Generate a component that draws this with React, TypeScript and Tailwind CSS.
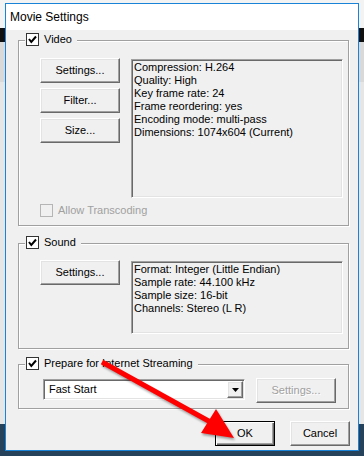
import React from 'react';

const raised =
  'border border-t-white border-l-white border-b-[#696969] border-r-[#696969] shadow-[inset_-1px_-1px_0_#a0a0a0,inset_1px_1px_0_#e3e3e3]';
const sunken =
  'border border-t-[#a0a0a0] border-l-[#a0a0a0] border-b-white border-r-white shadow-[inset_1px_1px_0_#696969,inset_-1px_-1px_0_#e3e3e3]';

function CheckBox({ checked = true, disabled = false }: { checked?: boolean; disabled?: boolean }) {
  return (
    <div
      className={`flex h-[13px] w-[13px] shrink-0 items-center justify-center border ${
        disabled ? 'border-[#b5b5b5] bg-[#f0f0f0]' : 'border-[#333] bg-white'
      }`}
    >
      {checked && (
        <svg width="11" height="11" viewBox="0 0 11 11">
          <polyline points="2,5 4.3,8 9,2.5" fill="none" stroke="#000" strokeWidth="2" />
        </svg>
      )}
    </div>
  );
}

function Button({ label, w = 'w-[80px]', disabled = false, isDefault = false }: { label: string; w?: string; disabled?: boolean; isDefault?: boolean }) {
  if (isDefault) {
    return (
      <div className={`flex h-[25px] ${w} items-center justify-center border border-black bg-[#f0f0f0] shadow-[inset_1px_1px_0_#fff,inset_-1px_-1px_0_#696969,inset_-2px_-2px_0_#a0a0a0]`}>
        <span>{label}</span>
      </div>
    );
  }
  return (
    <div className={`flex h-[25px] ${w} items-center justify-center bg-[#f0f0f0] ${raised}`}>
      <span className={disabled ? 'text-[#a0a0a0] [text-shadow:1px_1px_0_#fff]' : ''}>{label}</span>
    </div>
  );
}

function Group({ title, className, children }: { title: string; className: string; children: React.ReactNode }) {
  return (
    <div
      className={`relative ml-[12px] w-[331px] border border-[#a0a0a0] shadow-[1px_1px_0_#fff,inset_1px_1px_0_#fff] ${className}`}
    >
      <div className="absolute left-[6px] top-[-8px] flex h-[13px] items-center gap-[5px] bg-[#f0f0f0] pl-px pr-[5px]">
        <CheckBox />
        <span className="leading-[13px]">{title}</span>
      </div>
      {children}
    </div>
  );
}

function InfoBox({ lines, h }: { lines: string[]; h: string }) {
  return (
    <div className={`ml-[11px] mt-px w-[212px] ${h} bg-[#f0f0f0] pl-[1px] pt-[1px] ${sunken}`}>
      {lines.map((l) => (
        <div key={l} className="leading-[13px] pl-px">
          {l}
        </div>
      ))}
    </div>
  );
}

export default function App() {
  return (
    <div className="relative h-[456px] w-[364px] overflow-hidden text-[11px] text-black [font-family:'Liberation_Sans',Arial,sans-serif]">
      {/* desktop behind the dialog */}
      <div className="flex h-full flex-col">
        <div className="h-[28px] bg-[#f3f3f3]" />
        <div className="h-[14px] bg-[#101010]" />
        <div className="h-[40px] bg-[#d9d9d9]" />
        <div className="flex-1 bg-[#e6e6e6]" />
        <div className="h-[32px] bg-[#26415a]" />
      </div>

      {/* dialog window */}
      <div className="absolute left-[5px] top-[3px] flex h-[448px] w-[354px] flex-col border border-[#1883d7] bg-[#f0f0f0]">
        <div className="flex h-[26px] items-center bg-white pl-[4px] text-[12px]">Movie Settings</div>

        <div className="flex flex-col pt-[10px]">
          <Group title="Video" className="h-[186px] pl-[21px] pt-[17px]">
            <div className="flex">
              <div className="flex flex-col gap-[5px]">
                <Button label="Settings..." />
                <Button label="Filter..." />
                <Button label="Size..." />
              </div>
              <InfoBox
                h="h-[139px]"
                lines={[
                  'Compression: H.264',
                  'Quality: High',
                  'Key frame rate: 24',
                  'Frame reordering: yes',
                  'Encoding mode: multi-pass',
                  'Dimensions: 1074x604 (Current)',
                ]}
              />
            </div>
            <div className="mt-[6px] flex items-center gap-[5px]">
              <CheckBox checked={false} disabled />
              <span className="leading-[13px] text-[#a0a0a0]">Allow Transcoding</span>
            </div>
          </Group>

          <Group title="Sound" className="mt-[17px] h-[106px] pl-[21px] pt-[16px]">
            <div className="flex">
              <Button label="Settings..." />
              <InfoBox
                h="h-[73px]"
                lines={['Format: Integer (Little Endian)', 'Sample rate: 44.100 kHz', 'Sample size: 16-bit', 'Channels: Stereo (L R)']}
              />
            </div>
          </Group>

          <Group title="Prepare for Internet Streaming" className="mt-[15px] h-[45px] pl-[24px] pt-[13px]">
            <div className="flex">
              <div className={`mt-px flex h-[21px] w-[202px] items-center bg-white ${sunken}`}>
                <span className="flex-1 pl-[5px]">Fast Start</span>
                <div className={`mr-px flex h-[17px] w-[16px] items-center justify-center bg-[#f0f0f0] ${raised}`}>
                  <svg width="7" height="4" viewBox="0 0 7 4">
                    <polygon points="0,0 7,0 3.5,4" fill="#000" />
                  </svg>
                </div>
              </div>
              <div className="ml-[11px]">
                <Button label="Settings..." disabled />
              </div>
            </div>
          </Group>

          <div className="mt-[12px] flex justify-end gap-[15px] pr-[8px]">
            <Button label="OK" w="w-[60px]" isDefault />
            <Button label="Cancel" w="w-[60px]" />
          </div>
        </div>
      </div>

      {/* red annotation arrow */}
      <svg className="pointer-events-none absolute inset-0 drop-shadow-[1px_2px_1px_rgba(0,0,0,0.35)]" width="364" height="456">
        <line x1="102" y1="362" x2="214" y2="424" stroke="#f00" strokeWidth="5" />
        <polygon points="216,409 201,433 234,438" fill="#f00" />
      </svg>
    </div>
  );
}
